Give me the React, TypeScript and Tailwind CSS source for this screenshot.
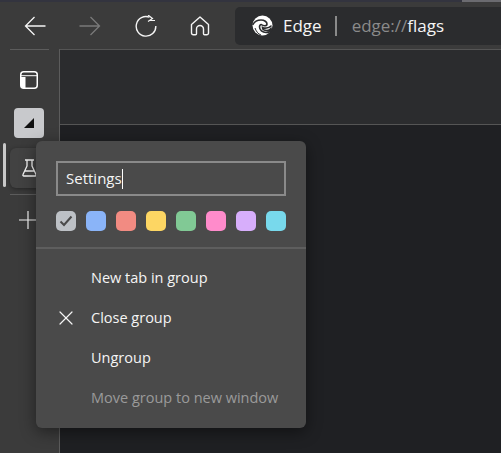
import { X } from "lucide-react";

const swatches = ["bg-[#8ab4f8]", "bg-[#f28b82]", "bg-[#fdd663]", "bg-[#81c995]", "bg-[#ff8bcb]", "bg-[#d7aefb]", "bg-[#78d9ec]"];

const menuItems = [
  { label: "New tab in group", icon: false, muted: false },
  { label: "Close group", icon: true, muted: false },
  { label: "Ungroup", icon: false, muted: false },
  { label: "Move group to new window", icon: false, muted: true },
];

const EdgeLogo = () => (
  <svg width="21" height="21" viewBox="0 0 21 21" className="shrink-0">
    <circle cx="10.5" cy="10.5" r="10" fill="#fff" />
    <path d="M1 9.5C2.5 6.5 5.5 5 9 5c3.5 0 6 2 6 4 0 1-1 1.8-2.5 1.8-1.3 0-2.2-.5-3.2-1.3-1 .1-1.8 1-1.8 2.5 0 3 3 5.5 6.5 5.5 2.5 0 4.5-1 5.5-2.5l-.5-1.5C18 15 16.500 15.500 15 15.500c-3 0-4.500-1.500-4.500-3 1.500 1 6 1 8.500-1.500" fill="none" stroke="#2b2c2e" strokeWidth="1.6" strokeLinecap="round" />
    <path d="M3 13c1 3 3 6 6 7" fill="none" stroke="#2b2c2e" strokeWidth="1" />
  </svg>
);

const Arrow = ({ flip, className }: { flip?: boolean; className?: string }) => (
  <svg width="22" height="20" viewBox="0 0 22 20" fill="none" stroke="currentColor" strokeWidth="1.3" className={`${flip ? "-scale-x-100" : ""} ${className ?? ""}`}>
    <path d="M10.500 1 1.500 10l9 9M1.500 10H21.500" />
  </svg>
);

export default function App() {
  return (
    <div className="relative w-[501px] h-[453px] overflow-hidden bg-[#3b3b3b] font-['Open_Sans','Noto_Sans',sans-serif] text-[#f5f5f5]">
      <div className="h-[2px] flex">
        <div className="w-[462px] bg-[#33343f]" />
        <div className="flex-1 bg-[#6b6b70]" />
      </div>
      <div className="flex items-center h-[47px] pl-[24px]">
        <Arrow />
        <Arrow flip className="ml-[33px] text-[#7a7a7a]" />
        <svg width="22" height="22" viewBox="0 0 22 22" fill="none" stroke="currentColor" strokeWidth="1.4" className="ml-[34px]">
          <path d="M14.500 2.200A9.800 9.800 0 1 0 20.800 11" />
          <path d="M13 0 17.500 3.500 13 6.500M20 5.500h-5" strokeWidth="1.200" />
        </svg>
        <svg width="20" height="20" viewBox="0 0 20 20" fill="none" stroke="currentColor" strokeWidth="1.4" strokeLinejoin="round" className="ml-[33px]">
          <path d="M1.500 8.500 10 1l8.500 7.500V17a1.800 1.800 0 0 1-1.800 1.800h-2.200a1 1 0 0 1-1-1V13a3.500 3.500 0 0 0-7 0v4.800a1 1 0 0 1-1 1H3.300A1.800 1.800 0 0 1 1.500 17z" />
        </svg>
        <div className="ml-[25px] flex items-center flex-1 h-[38px] rounded-l-[5px] bg-[#2b2c2e] pl-[17px] text-[17px]">
          <EdgeLogo />
          <span className="ml-[10px]">Edge</span>
          <span className="ml-[13px] w-[2px] h-[20px] bg-[#8a8a8a]" />
          <span className="ml-[15px] text-[#8a8a8a]">edge://<span className="text-[#f5f5f5]">flags</span></span>
        </div>
      </div>
      <div className="flex h-[404px]">
        <div className="w-[59px] flex flex-col items-center shrink-0">
          <div className="w-[39px] h-px bg-[#5c5c5c]" />
          <svg width="18" height="18" viewBox="0 0 18 18" className="mt-[21px] -ml-px">
            <rect x="0.750" y="0.750" width="16.500" height="16.500" rx="3" fill="none" stroke="#fff" strokeWidth="1.500" />
            <path d="M1 6h4.500v11H3a2 2 0 0 1-2-2z" fill="#fff" />
            <path d="M1 4.700h16" stroke="#fff" strokeWidth="1" />
          </svg>
          <div className="mt-[19px] -ml-px w-[30px] h-[30px] rounded-[4px] bg-[#c8c9cc] flex items-center justify-center">
            <svg width="12" height="12" viewBox="0 0 12 12"><path d="M11 1v10H1z" fill="#111" /></svg>
          </div>
          <div className="mt-[10px] -ml-px relative w-[38px] h-[40px] rounded-[6px] bg-[#424242] shadow-[0_1px_4px_rgba(0,0,0,0.4)] flex items-center justify-center">
            <svg width="15" height="18" viewBox="0 0 15 18" fill="none" stroke="#f5f5f5" strokeWidth="1.300" strokeLinejoin="round">
              <path d="M3 1h9M5 1v6L1 15.500a1 1 0 0 0 1 1.500h11a1 1 0 0 0 1-1.500L10 7V1M3 12h9" />
            </svg>
            <div className="absolute left-[-7px] top-[-5px] w-[3px] h-[44px] bg-[#c8c8c8] rounded-full" />
          </div>
          <div className="mt-[6px] w-[39px] h-px bg-[#5c5c5c]" />
          <svg width="18" height="18" viewBox="0 0 18 18" stroke="#f5f5f5" strokeWidth="1.200" className="mt-[16px] -ml-[4px]">
            <path d="M9 0v18M0 9h18" />
          </svg>
        </div>
        <div className="flex-1 flex flex-col bg-[#1f2023] border-l border-[#5c5c5c]">
          <div className="h-[76px] bg-[#2b2c2e] border-t border-b border-[#555]" />
        </div>
      </div>
      <div className="absolute left-[36px] top-[141px] w-[270px] h-[287px] rounded-[6px] bg-[#4a4a4a] shadow-[0_4px_16px_rgba(0,0,0,0.45)]">
        <div className="mx-[20px] mt-[20px] h-[35px] border-[2px] border-[#8a8a8a] flex items-center pl-[8px] text-[15px]">
          Settings<span className="w-px h-[20px] bg-white" />
        </div>
        <div className="mx-[20px] mt-[15px] flex gap-[10px]">
          <div className="w-[20px] h-[20px] rounded-[5px] bg-[#bdc1c6] flex items-center justify-center">
            <svg width="14" height="12" viewBox="0 0 14 12" fill="none" stroke="#4a4a4a" strokeWidth="2"><path d="M1.500 6.500 5 10l7.500-8.500" /></svg>
          </div>
          {swatches.map((c) => (
            <div key={c} className={`w-[20px] h-[20px] rounded-[5px] ${c}`} />
          ))}
        </div>
        <div className="mt-[16px] h-[2px] bg-[#5e5e5e]" />
        <div className="mt-[9px] flex flex-col">
          {menuItems.map((m) => (
            <div key={m.label} className={`h-[40px] flex items-center text-[14.500px] ${m.muted ? "text-[#9a9a9a]" : "text-[#f5f5f5]"}`}>
              <div className="w-[55px] flex justify-center pl-[5px]">
                {m.icon && <X size={24} strokeWidth={1.2} />}
              </div>
              {m.label}
            </div>
          ))}
        </div>
      </div>
    </div>
  );
}
